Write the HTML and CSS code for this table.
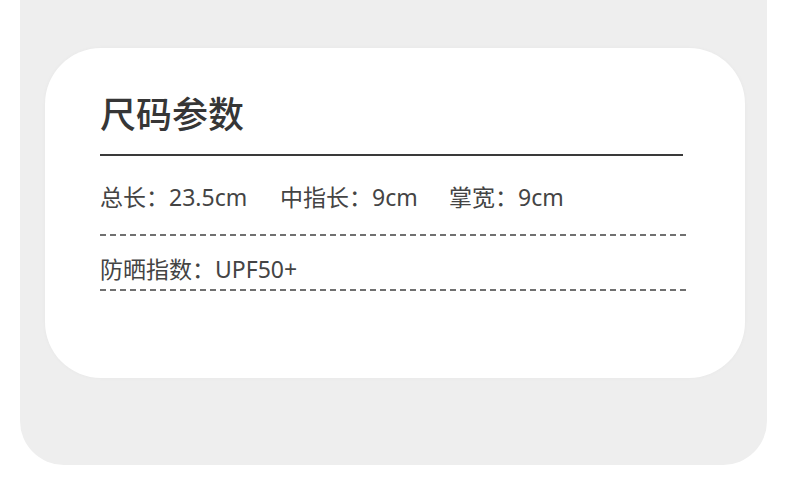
FILE: index.html
```html
<!DOCTYPE html>
<html lang="zh">
<head>
<meta charset="utf-8">
<link rel="stylesheet" href="styles.css">
</head>
<body>
<div class="outer">
  <div class="card">
    <h1 class="title">尺码参数</h1>
    <div class="rule"></div>
    <div class="row first">
      <span class="item w1">总长：23.5cm</span>
      <span class="item w2">中指长：9cm</span>
      <span class="item">掌宽：9cm</span>
    </div>
    <div class="dash"></div>
    <div class="row second">
      <span class="item">防晒指数：UPF50+</span>
    </div>
    <div class="dash"></div>
  </div>
</div>
</body>
</html>
```
FILE: styles.css
```css
html, body {
  margin: 0;
  padding: 0;
  background: #ffffff;
  width: 790px;
  height: 487px;
  overflow: hidden;
}
body {
  font-family: "Noto Sans CJK SC", "Noto Sans", sans-serif;
  color: #3a3a3a;
}
.outer {
  margin-left: 20px;
  width: 747px;
  height: 465px;
  background: #eeeeee;
  border-radius: 0 0 44px 44px;
  padding: 48px 0 0 25px;
  box-sizing: border-box;
}
.card {
  width: 700px;
  height: 330px;
  background: #ffffff;
  border-radius: 56px;
  box-sizing: border-box;
  padding: 38px 0 0 55px;
  box-shadow: 0 0 4px rgba(0,0,0,0.03);
}
.title {
  margin: 0;
  font-size: 36px;
  font-weight: 500;
  line-height: 52px;
  color: #363636;
}
.rule {
  width: 583px;
  height: 2px;
  background: #3a3a3a;
  margin-top: 16px;
}
.row {
  display: flex;
  font-family: "Noto Sans", "Noto Sans CJK SC", sans-serif;
  font-size: 23px;
  line-height: 32px;
  color: #444444;
}
.row.first {
  margin-top: 25px;
}
.row.second {
  margin-top: 17px;
}
.item {
  white-space: nowrap;
}
.w1 {
  width: 180px;
}
.w2 {
  width: 169px;
}
.dash {
  width: 588px;
  height: 2px;
  margin-top: 21px;
  background-image: linear-gradient(to right, #707070 0, #707070 6px, transparent 6px, transparent 10px);
  background-size: 10px 2px;
  background-repeat: repeat-x;
}
.second + .dash {
  margin-top: 4px;
}
```
